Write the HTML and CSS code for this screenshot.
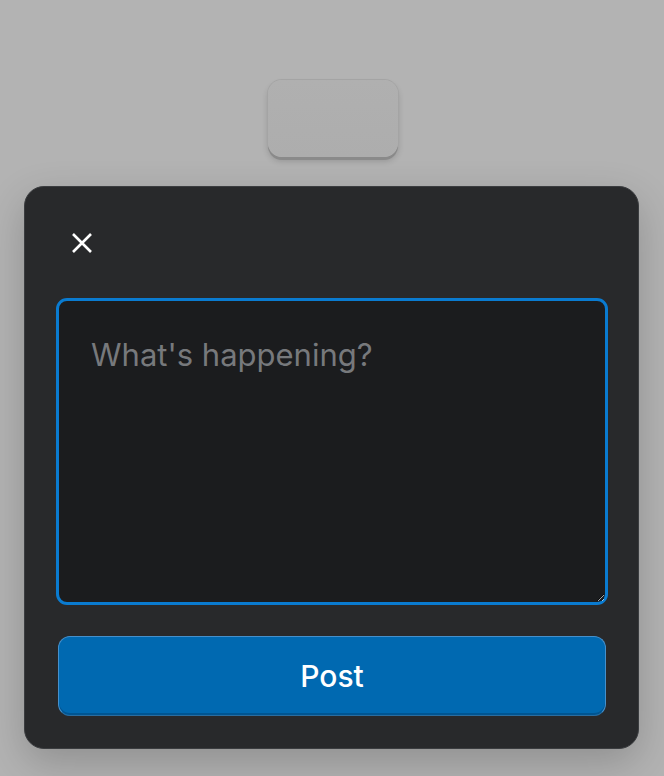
FILE: index.html
```html
<!DOCTYPE html>
<html lang="en">
<head>
<meta charset="utf-8">
<title>Compose</title>
<link rel="stylesheet" href="styles.css">
</head>
<body>
  <div class="page">
    <button class="trigger" type="button" aria-label="Open composer"></button>
    <div class="dialog" role="dialog">
      <div class="dialog-header">
        <button class="close" type="button" aria-label="Close">
          <svg width="22" height="22" viewBox="0 0 22 22" aria-hidden="true">
            <path d="M2 2 L20 20 M20 2 L2 20" stroke="#ffffff" stroke-width="2.6" stroke-linecap="butt" fill="none"/>
          </svg>
        </button>
      </div>
      <textarea class="composer" placeholder="What's happening?" autofocus></textarea>
      <button class="post" type="button">Post</button>
    </div>
  </div>
</body>
</html>
```
FILE: styles.css
```css
* { box-sizing: border-box; }
html, body {
  margin: 0;
  padding: 0;
  background: #b3b3b3;
  font-family: Inter, "Noto Sans", sans-serif;
}
.page {
  display: flex;
  flex-direction: column;
  align-items: flex-start;
  padding-top: 80px;
  min-height: 776px;
}
.trigger {
  align-self: center;
  width: 130px;
  height: 77px;
  border-radius: 14px;
  border: none;
  background: linear-gradient(#b0b0b0, #adadad);
  box-shadow: 0 3px 0 #8a8a8a, 0 0 0 1px #a4a4a4, 0 4px 6px rgba(0,0,0,0.18);
  margin-left: 1px;
}
.dialog {
  margin: 29px 0 0 24px;
  width: 615px;
  background: #28292b;
  border: 1px solid #3b3d40;
  border-radius: 20px;
  padding: 0 30px 32px 31px;
  display: flex;
  flex-direction: column;
  box-shadow: 0 14px 40px rgba(0,0,0,0.2);
}
.dialog-header {
  height: 111px;
  display: flex;
  align-items: center;
}
.close {
  width: 40px;
  height: 40px;
  margin-left: 6px;
  padding: 0;
  border: none;
  background: transparent;
  display: flex;
  align-items: center;
  justify-content: center;
}
.composer {
  width: 552px;
  height: 307px;
  background: #1b1c1e;
  border: 3px solid #0a7bd0;
  border-radius: 11px;
  padding: 36px 30px 36px 32px;
  color: #e8e8e8;
  caret-color: #ffffff;
  font-family: Inter, "Noto Sans", sans-serif;
  font-size: 31px;
  line-height: 36px;
  outline: none;
}
.composer::placeholder {
  color: #77797c;
}
.post {
  margin: 31px 2px 0 2px;
  height: 80px;
  width: 548px;
  background: #0069b1;
  border: 1px solid #4690cb;
  border-bottom-color: #2a6da0;
  box-shadow: inset 0 -2px 0 #005592;
  border-radius: 12px;
  color: #ffffff;
  font-family: Inter, "Noto Sans", sans-serif;
  font-size: 30px;
  font-weight: 500;
}
```
